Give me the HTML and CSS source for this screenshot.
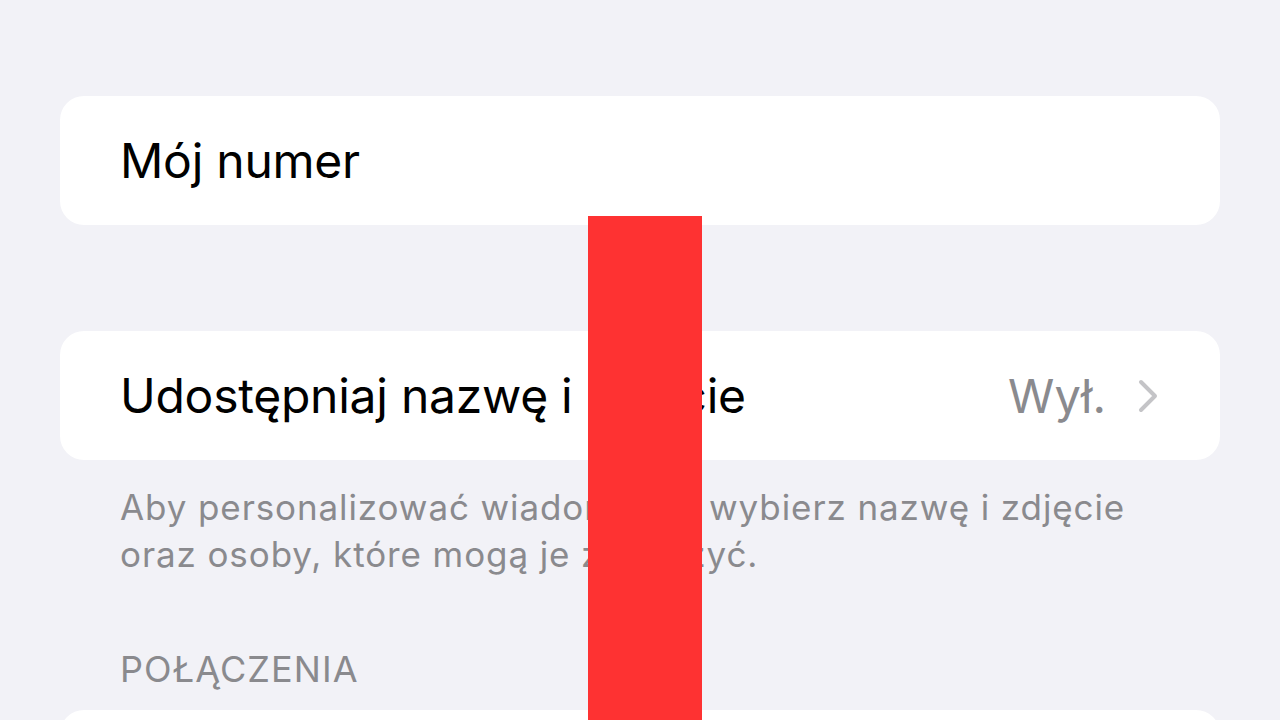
FILE: index.html
```html
<!DOCTYPE html>
<html lang="pl">
<head>
  <meta charset="UTF-8" />
  <meta name="viewport" content="width=device-width, initial-scale=1.0"/>
  <title>Wiadomości</title>
  <link rel="stylesheet" href="styles.css">
</head>
<body>
  <div class="page">
    <div class="card row">
      <span class="label">Mój numer</span>
    </div>

    <div class="card row second">
      <span class="label">Udostępniaj nazwę i zdjęcie</span>
      <span class="value">Wył.</span>
      <svg class="chevron" width="24" height="38" viewBox="0 0 24 38">
        <path d="M5 5 L19 19 L5 33" fill="none" stroke="#c4c4c7" stroke-width="4" stroke-linecap="round" stroke-linejoin="round"/>
      </svg>
    </div>
    <p class="footnote">Aby personalizować wiadomości, wybierz nazwę i zdjęcie<br>oraz osoby, które mogą je zobaczyć.</p>

    <div class="section-title">POŁĄCZENIA</div>
    <div class="card row"></div>
  </div>

  <div class="redact"></div>
</body>
</html>
```

FILE: styles.css
```css
body { margin: 0; background: #f2f2f7; font-family: Inter, "Open Sans", sans-serif; overflow: hidden; }
.page { padding: 96px 60px 0; height: 720px; box-sizing: border-box; }
.card { background: #fff; border-radius: 24px; }
.row {
  height: 129px; display: flex; align-items: center;
  padding: 0 60px 0 60px; box-sizing: border-box;
}
.second { margin-top: 106px; }
.label { font-size: 48px; color: #000; flex: 1; letter-spacing: -0.25px; }
.value { font-size: 47px; color: #8a8a8e; margin-right: 30px; }
.chevron { display: block; }
.footnote {
  margin: 0; padding: 24px 60px 0;
  font-size: 35px; line-height: 47px; color: #8a8a8e; letter-spacing: 0.9px;
}
.section-title {
  padding: 70px 60px 0; font-size: 36px; color: #8a8a8e;
  letter-spacing: 1.1px; line-height: 42px;
}
.section-title + .card { margin-top: 20px; }
.redact {
  position: absolute; left: 588px; top: 216px;
  width: 114px; height: 504px; background: #fe3232;
}
```
